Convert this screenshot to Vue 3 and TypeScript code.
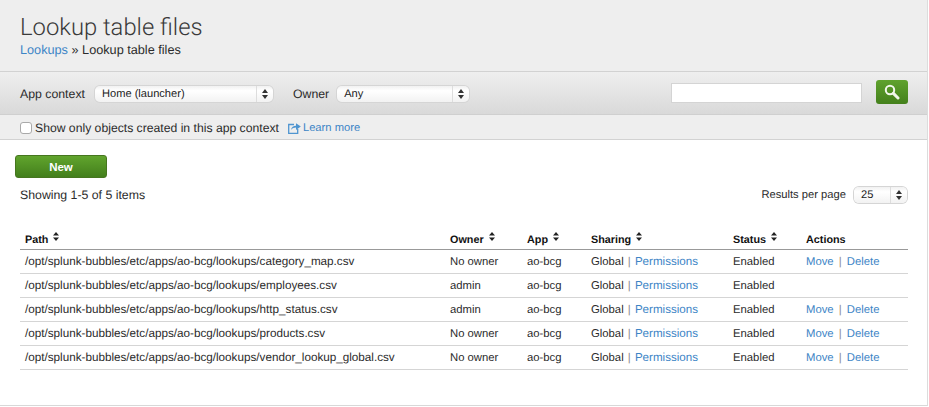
<script setup lang="ts">
interface LookupRow {
  path: string
  owner: string
  canMove: boolean
}

const base = '/opt/splunk-bubbles/etc/apps/ao-bcg/lookups/'

const rows: LookupRow[] = [
  { path: base + 'category_map.csv', owner: 'No owner', canMove: true },
  { path: base + 'employees.csv', owner: 'admin', canMove: false },
  { path: base + 'http_status.csv', owner: 'admin', canMove: true },
  { path: base + 'products.csv', owner: 'No owner', canMove: true },
  { path: base + 'vendor_lookup_global.csv', owner: 'No owner', canMove: true },
]

const columns = [
  { label: 'Path', sortable: true },
  { label: 'Owner', sortable: true },
  { label: 'App', sortable: true },
  { label: 'Sharing', sortable: true },
  { label: 'Status', sortable: true },
  { label: 'Actions', sortable: false },
]
</script>

<template>
  <div class="page">
    <header class="head">
      <h1>Lookup table files</h1>
      <div class="crumbs"><a>Lookups</a> » Lookup table files</div>
    </header>

    <div class="filters">
      <label class="filter-label">App context</label>
      <div class="select select--app">
        <span>Home (launcher)</span>
        <i class="select__arrows"><svg width="6" height="10" viewBox="0 0 6 10"><path d="M3 0 6 4H0zM3 10 0 6h6z" /></svg></i>
      </div>
      <label class="filter-label filter-label--owner">Owner</label>
      <div class="select select--owner">
        <span>Any</span>
        <i class="select__arrows"><svg width="6" height="10" viewBox="0 0 6 10"><path d="M3 0 6 4H0zM3 10 0 6h6z" /></svg></i>
      </div>
      <div class="search">
        <div class="search__input"></div>
        <button class="search__btn" aria-label="Search">
          <svg width="16" height="16" viewBox="0 0 16 16">
            <circle cx="6" cy="6" r="4.2" fill="none" stroke="#f2f7ec" stroke-width="2" />
            <path d="M9.4 9.4 14 14" stroke="#f2f7ec" stroke-width="3" stroke-linecap="round" />
          </svg>
        </button>
      </div>
    </div>

    <div class="scope">
      <span class="checkbox"></span>
      <span>Show only objects created in this app context</span>
      <a class="learn">
        <svg width="13" height="12" viewBox="0 0 13 12">
          <path d="M6 2.5H.7v9h9V7" fill="none" stroke="#4f95d0" stroke-width="1.3" />
          <path d="M3 8C3.5 5.2 5.4 3.8 8 3.8V1.2L12.8 4.6 8 8V5.6C6 5.6 4.4 6.4 3 8z" fill="#4f95d0" />
        </svg>
        Learn more
      </a>
    </div>

    <main class="content">
      <button class="new-btn">New</button>
      <div class="paging">
        <span>Showing 1-5 of 5 items</span>
        <div class="per-page">
          <span>Results per page</span>
          <div class="select select--count">
            <span>25</span>
            <i class="select__arrows"><svg width="6" height="10" viewBox="0 0 6 10"><path d="M3 0 6 4H0zM3 10 0 6h6z" /></svg></i>
          </div>
        </div>
      </div>

      <table class="grid">
        <colgroup>
          <col class="col-path" />
          <col class="col-owner" />
          <col class="col-app" />
          <col class="col-sharing" />
          <col class="col-status" />
          <col />
        </colgroup>
        <thead>
          <tr>
            <th v-for="col in columns" :key="col.label">
              {{ col.label }}
              <svg v-if="col.sortable" class="sort" width="6" height="9" viewBox="0 0 6 9"><path d="M3 0 6 3.4H0zM3 9 0 5.6h6z" /></svg>
            </th>
          </tr>
        </thead>
        <tbody>
          <tr v-for="row in rows" :key="row.path">
            <td class="path">{{ row.path }}</td>
            <td>{{ row.owner }}</td>
            <td>ao-bcg</td>
            <td>Global <span class="pipe pipe--tight">|</span> <a class="perm">Permissions</a></td>
            <td>Enabled</td>
            <td>
              <template v-if="row.canMove"><a>Move</a> <span class="pipe">|</span> <a>Delete</a></template>
            </td>
          </tr>
        </tbody>
      </table>
    </main>
  </div>
</template>

<style>
html,
body {
  margin: 0;
  background: #fff;
}
</style>

<style scoped>
.page {
  width: 928px;
  height: 406px;
  overflow: hidden;
  box-sizing: border-box;
  border-right: 1px solid #dcdcdc;
  border-bottom: 1px solid #d8d8d8;
  font-family: "Liberation Sans", Arial, sans-serif;
  font-size: 12.3px;
  color: #2b2b2b;
  text-rendering: geometricPrecision;
}

a {
  color: #3d85c6;
}

.head {
  height: 72px;
  box-sizing: border-box;
  padding: 13px 20px 0;
  background: #eee;
  border-bottom: 1px solid #d2d2d2;
}

.head h1 {
  margin: 0;
  font-family: Roboto, sans-serif;
  font-size: 23.8px;
  line-height: 28px;
  font-weight: 300;
  color: #3a3a3a;
}

.crumbs {
  font-size: 12.7px;
  line-height: 18px;
}

.filters {
  display: flex;
  align-items: center;
  height: 41px;
  padding: 1px 19px 0 20px;
  background: linear-gradient(#efefef, #d9d9d9);
  border-bottom: 1px solid #cfcfcf;
}

.filter-label {
  margin-right: 10px;
}

.filter-label--owner {
  margin-left: 20px;
  margin-right: 8px;
}

.select {
  display: flex;
  align-items: center;
  justify-content: space-between;
  box-sizing: border-box;
  height: 16px;
  padding-left: 7px;
  border-radius: 5px;
  background: linear-gradient(#f1f1f1, #fff 30%, #f2f2f2);
  box-shadow: 0 0 0 1px #d5d5d5;
  font-size: 11.1px;
  color: #222;
}

.select--app {
  width: 178px;
}

.select--owner {
  width: 132px;
}

.select--count {
  width: 53px;
}

.select__arrows {
  display: flex;
  align-items: center;
  justify-content: center;
  width: 16px;
  height: 100%;
  border-left: 1px solid #ddd;
}

.select__arrows svg {
  fill: #333;
}

.search {
  display: flex;
  align-items: flex-start;
  gap: 14px;
  margin-left: auto;
  margin-bottom: 3px;
}

.search__input {
  width: 189px;
  height: 18px;
  margin-top: 3px;
  background: #fff;
  border: 1px solid #d4d4d4;
}

.search__btn {
  display: flex;
  align-items: center;
  justify-content: center;
  width: 32px;
  height: 24px;
  padding: 0;
  border: 0;
  border-radius: 3px;
  background: linear-gradient(#5fa22d, #44801c);
}

.scope {
  display: flex;
  align-items: center;
  height: 23px;
  padding: 1px 20px 0;
  background: #eee;
  border-bottom: 1px solid #d2d2d2;
  font-size: 12.2px;
}

.checkbox {
  width: 10px;
  height: 10px;
  margin-right: 3px;
  border: 1px solid #a9a9a9;
  border-radius: 3px;
  background: #fff;
}

.learn {
  display: flex;
  align-items: center;
  gap: 2px;
  margin-left: 9px;
  font-size: 11.2px;
}

.content {
  padding: 15px 20px 0;
}

.new-btn {
  display: block;
  width: 92px;
  height: 23px;
  margin-left: -5px;
  padding: 0;
  border: 1px solid #46761f;
  border-radius: 3px;
  background: linear-gradient(#61a42d, #437f1c);
  color: #fff;
  font: 700 11.5px "Liberation Sans", sans-serif;
}

.paging {
  display: flex;
  align-items: center;
  justify-content: space-between;
  height: 16px;
  margin-top: 9px;
}

.per-page {
  display: flex;
  align-items: center;
  gap: 8px;
  font-size: 11.2px;
}

.grid {
  width: 888px;
  margin-top: 23px;
  border-collapse: collapse;
  table-layout: fixed;
}

.col-path {
  width: 425px;
}

.col-owner {
  width: 77px;
}

.col-app {
  width: 64px;
}

.col-sharing {
  width: 142px;
}

.col-status {
  width: 73px;
}

.grid th {
  height: 19px;
  padding: 4px 5px 0;
  line-height: 14px;
  text-align: left;
  font-size: 10.8px;
  font-weight: 700;
  color: #111;
  border-bottom: 1px solid #999;
}

.grid td {
  height: 23px;
  padding: 0 5px;
  line-height: 14px;
  font-size: 11.3px;
  white-space: nowrap;
  border-bottom: 1px solid #d5d5d5;
}

.grid td.path {
  font-size: 11.7px;
}

.perm {
  font-size: 11.6px;
}

.sort {
  margin-left: 2px;
  fill: #222;
  vertical-align: 2px;
}

.pipe {
  margin: 0 2px;
  color: #888;
}

.pipe--tight {
  margin: 0 1px;
}
</style>
